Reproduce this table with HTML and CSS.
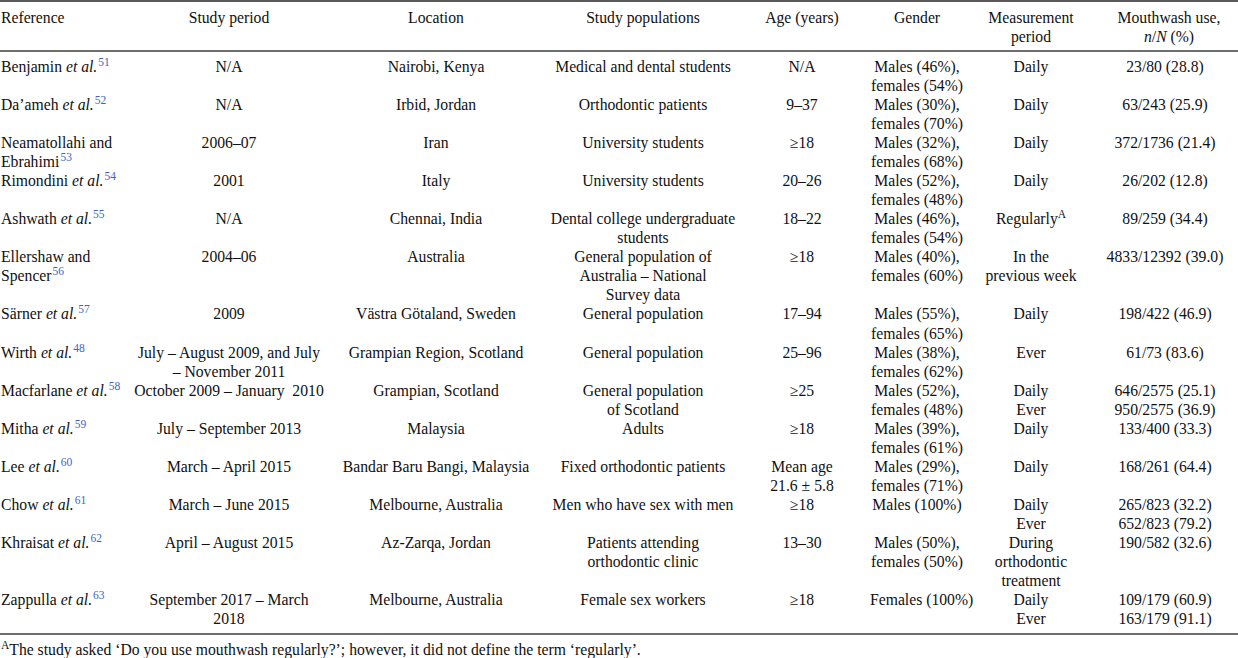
FILE: index.html
```html
<!DOCTYPE html>
<html lang="en">
<head>
<meta charset="utf-8">
<title>Mouthwash use studies</title>
<link rel="stylesheet" href="styles.css">
</head>
<body>
<table class="data">
  <colgroup>
    <col class="c-ref"><col class="c-period"><col class="c-loc"><col class="c-pop">
    <col class="c-age"><col class="c-gender"><col class="c-meas"><col class="c-use">
  </colgroup>
  <thead>
    <tr>
      <th class="left">Reference</th>
      <th>Study period</th>
      <th>Location</th>
      <th>Study populations</th>
      <th>Age (years)</th>
      <th class="gender">Gender</th>
      <th>Measurement<br>period</th>
      <th class="use-h">Mouthwash use,<br><i>n</i>/<i>N</i> (%)</th>
    </tr>
  </thead>
  <tbody>
    <tr>
      <td class="left">Benjamin <i>et al.</i><sup class="ref">51</sup></td>
      <td>N/A</td><td>Nairobi, Kenya</td><td>Medical and dental students</td><td>N/A</td>
      <td class="gender">Males (46%),<br>females (54%)</td><td>Daily</td><td>23/80 (28.8)</td>
    </tr>
    <tr>
      <td class="left">Da’ameh <i>et al.</i><sup class="ref">52</sup></td>
      <td>N/A</td><td>Irbid, Jordan</td><td>Orthodontic patients</td><td>9–37</td>
      <td class="gender">Males (30%),<br>females (70%)</td><td>Daily</td><td>63/243 (25.9)</td>
    </tr>
    <tr>
      <td class="left">Neamatollahi and<br>Ebrahimi<sup class="ref">53</sup></td>
      <td>2006–07</td><td>Iran</td><td>University students</td><td>≥18</td>
      <td class="gender">Males (32%),<br>females (68%)</td><td>Daily</td><td>372/1736 (21.4)</td>
    </tr>
    <tr>
      <td class="left">Rimondini <i>et al.</i><sup class="ref">54</sup></td>
      <td>2001</td><td>Italy</td><td>University students</td><td>20–26</td>
      <td class="gender">Males (52%),<br>females (48%)</td><td>Daily</td><td>26/202 (12.8)</td>
    </tr>
    <tr>
      <td class="left">Ashwath <i>et al.</i><sup class="ref">55</sup></td>
      <td>N/A</td><td>Chennai, India</td><td>Dental college undergraduate<br>students</td><td>18–22</td>
      <td class="gender">Males (46%),<br>females (54%)</td><td>Regularly<sup class="note">A</sup></td><td>89/259 (34.4)</td>
    </tr>
    <tr>
      <td class="left">Ellershaw and<br>Spencer<sup class="ref">56</sup></td>
      <td>2004–06</td><td>Australia</td><td>General population of<br>Australia – National<br>Survey data</td><td>≥18</td>
      <td class="gender">Males (40%),<br>females (60%)</td><td>In the<br>previous week</td><td>4833/12392 (39.0)</td>
    </tr>
    <tr>
      <td class="left">Särner <i>et al.</i><sup class="ref">57</sup></td>
      <td>2009</td><td>Västra Götaland, Sweden</td><td>General population</td><td>17–94</td>
      <td class="gender">Males (55%),<br>females (65%)</td><td>Daily</td><td>198/422 (46.9)</td>
    </tr>
    <tr>
      <td class="left">Wirth <i>et al.</i><sup class="ref">48</sup></td>
      <td>July – August 2009, and July<br>– November 2011</td><td>Grampian Region, Scotland</td><td>General population</td><td>25–96</td>
      <td class="gender">Males (38%),<br>females (62%)</td><td>Ever</td><td>61/73 (83.6)</td>
    </tr>
    <tr>
      <td class="left">Macfarlane <i>et al.</i><sup class="ref">58</sup></td>
      <td>October 2009 – January&nbsp; 2010</td><td>Grampian, Scotland</td><td>General population<br>of Scotland</td><td>≥25</td>
      <td class="gender">Males (52%),<br>females (48%)</td><td>Daily<br>Ever</td><td>646/2575 (25.1)<br>950/2575 (36.9)</td>
    </tr>
    <tr>
      <td class="left">Mitha <i>et al.</i><sup class="ref">59</sup></td>
      <td>July – September 2013</td><td>Malaysia</td><td>Adults</td><td>≥18</td>
      <td class="gender">Males (39%),<br>females (61%)</td><td>Daily</td><td>133/400 (33.3)</td>
    </tr>
    <tr>
      <td class="left">Lee <i>et al.</i><sup class="ref">60</sup></td>
      <td>March – April 2015</td><td>Bandar Baru Bangi, Malaysia</td><td>Fixed orthodontic patients</td><td>Mean age<br>21.6 ± 5.8</td>
      <td class="gender">Males (29%),<br>females (71%)</td><td>Daily</td><td>168/261 (64.4)</td>
    </tr>
    <tr>
      <td class="left">Chow <i>et al.</i><sup class="ref">61</sup></td>
      <td>March – June 2015</td><td>Melbourne, Australia</td><td>Men who have sex with men</td><td>≥18</td>
      <td class="gender">Males (100%)</td><td>Daily<br>Ever</td><td>265/823 (32.2)<br>652/823 (79.2)</td>
    </tr>
    <tr>
      <td class="left">Khraisat <i>et al.</i><sup class="ref">62</sup></td>
      <td>April – August 2015</td><td>Az-Zarqa, Jordan</td><td>Patients attending<br>orthodontic clinic</td><td>13–30</td>
      <td class="gender">Males (50%),<br>females (50%)</td><td>During<br>orthodontic<br>treatment</td><td>190/582 (32.6)</td>
    </tr>
    <tr>
      <td class="left">Zappulla <i>et al.</i><sup class="ref">63</sup></td>
      <td>September 2017 – March<br>2018</td><td>Melbourne, Australia</td><td>Female sex workers</td><td>≥18</td>
      <td class="gender"><span class="nowrap">Females (100%)</span></td><td>Daily<br>Ever</td><td>109/179 (60.9)<br>163/179 (91.1)</td>
    </tr>
  </tbody>
</table>
<p class="footnote"><sup class="note">A</sup>The study asked ‘Do you use mouthwash regularly?’; however, it did not define the term ‘regularly’.</p>
</body>
</html>
```

FILE: styles.css
```css
html, body {
  margin: 0;
  padding: 0;
  background: #ffffff;
}
body {
  font-family: "Liberation Serif", "Times New Roman", serif;
  font-size: 15.7px;
  line-height: 19.07px;
  color: #111111;
}
.data {
  width: 1238px;
  border-collapse: collapse;
  table-layout: fixed;
  border-top: 2px solid #5a5a5a;
  border-bottom: 2px solid #6e6e6e;
}
.c-ref { width: 130px; }
.c-period { width: 198px; }
.c-loc { width: 216px; }
.c-pop { width: 198px; }
.c-age { width: 120px; }
.c-gender { width: 108px; }
.c-meas { width: 122px; }
.c-use { width: 146px; }

.data th,
.data td {
  padding: 0;
  text-align: center;
  vertical-align: top;
  font-weight: normal;
}
.data th {
  padding-top: 5.5px;
  padding-bottom: 4.5px;
  border-bottom: 2px solid #6e6e6e;
}
.data tbody tr:first-child td {
  padding-top: 4.5px;
}
.data tbody tr:last-child td {
  padding-bottom: 4px;
}
.data .left {
  text-align: left;
  padding-left: 1px;
}
.data .gender {
  padding-left: 8px;
  padding-right: 6px;
}
.data .use-h {
  padding-left: 8px;
}
.nowrap {
  white-space: nowrap;
}
sup {
  font-size: 11.5px;
  line-height: 0;
  vertical-align: 6px;
}
sup.ref {
  color: #3f63c4;
  margin-left: 1px;
}
sup.note {
  color: #111111;
}
.footnote {
  margin: 5.5px 0 0 0;
  padding-left: 1px;
}
```
